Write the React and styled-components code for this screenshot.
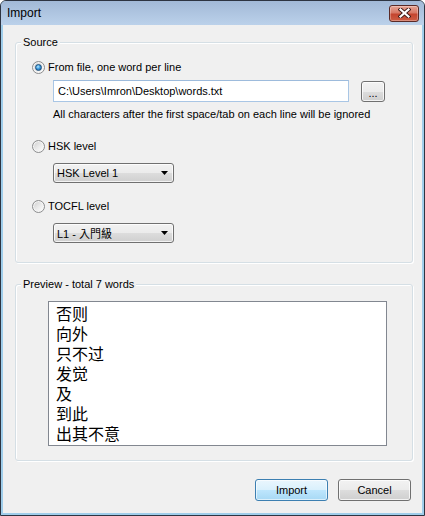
import React from "react";
import styled, { createGlobalStyle } from "styled-components";

const GlobalStyle = createGlobalStyle`
  html, body {
    margin: 0;
    padding: 0;
    background: #ffffff;
  }
  body {
    font-family: "Liberation Sans", Arial, sans-serif;
    font-size: 11px;
    color: #000;
  }
`;

const Window = styled.div`
  width: 425px;
  height: 516px;
  box-sizing: border-box;
  border: 1px solid #2d3441;
  border-radius: 6px 6px 0 0;
  background: #9fcdea;
  display: flex;
  flex-direction: column;
  overflow: hidden;
`;

const TitleBar = styled.div`
  height: 24px;
  flex: none;
  display: flex;
  align-items: center;
  justify-content: space-between;
  padding: 0 5px 0 6px;
  background: linear-gradient(#a2b9d7, #bbd1ea);
`;

const Title = styled.span`
  font-size: 12px;
  color: #000;
`;

const CloseButton = styled.div`
  width: 30px;
  height: 17px;
  box-sizing: border-box;
  border: 1px solid #5a2a26;
  border-radius: 3px;
  background: linear-gradient(#e8a595 0%, #d77865 45%, #c4452f 55%, #cd5d44 100%);
  box-shadow: inset 0 0 0 1px rgba(255, 255, 255, 0.3);
  display: flex;
  align-items: center;
  justify-content: center;
`;

const Client = styled.div`
  flex: 1;
  margin: 0 2px 2px;
  background: #f0f0f0;
  display: flex;
  flex-direction: column;
  padding: 17px 9px 0 12px;
`;

const Group = styled.div`
  border: 1px solid #d5dfe5;
  border-radius: 3px;
  box-shadow: inset 1px 1px 0 #fff, 1px 1px 0 #fff;
  display: flex;
  flex-direction: column;
  align-items: flex-start;
  padding-bottom: ${(p) => p.$bottom}px;
  margin-top: ${(p) => p.$top || 0}px;
`;

const Legend = styled.div`
  margin: -7px 0 0 5px;
  padding: 0 2px;
  background: #f0f0f0;
  line-height: 13px;
`;

const RadioRow = styled.label`
  display: flex;
  align-items: center;
  height: 15px;
  margin: ${(p) => p.$top}px 0 0 16px;
  line-height: 13px;
`;

const RadioCircle = styled.span`
  width: 13px;
  height: 13px;
  box-sizing: border-box;
  flex: none;
  border-radius: 50%;
  border: 1px solid #8c8d8e;
  background: linear-gradient(135deg, #cdcdcd 0%, #ececec 55%, #ffffff 100%);
  box-shadow: inset 0 0 0 1px #f6f6f6;
  display: flex;
  align-items: center;
  justify-content: center;
  margin-right: 3px;

  &::after {
    content: "";
    display: ${(p) => (p.$checked ? "block" : "none")};
    width: 7px;
    height: 7px;
    box-sizing: border-box;
    border-radius: 50%;
    border: 1px solid #1c4f7c;
    background: radial-gradient(circle at 40% 35%, #b7ecff 0%, #3d9be0 45%, #14538f 100%);
  }
`;

const Indent = styled.div`
  margin: ${(p) => p.$top}px 0 0 37px;
`;

const InputRow = styled(Indent)`
  display: flex;
  align-items: flex-end;
  gap: 12px;
`;

const TextInput = styled.div`
  width: 296px;
  height: 22px;
  box-sizing: border-box;
  border: 1px solid #a9c6e5;
  border-top-color: #9dbbdc;
  background: #fff;
  padding-left: 4px;
  display: flex;
  align-items: center;
`;

const Hint = styled(Indent)`
  line-height: 13px;
`;

const grayFace = `
  border: 1px solid #707070;
  border-radius: 3px;
  background: linear-gradient(#f2f2f2 0%, #ebebeb 50%, #dddddd 50%, #cfcfcf 100%);
  box-shadow: inset 0 0 0 1px rgba(255, 255, 255, 0.75);
`;

const SmallButton = styled.div`
  width: 24px;
  height: 21px;
  box-sizing: border-box;
  ${grayFace}
  display: flex;
  align-items: center;
  justify-content: center;
  padding-top: 2px;
`;

const Select = styled(Indent)`
  width: 121px;
  height: 20px;
  box-sizing: border-box;
  ${grayFace}
  display: flex;
  align-items: center;
  justify-content: space-between;
  padding: 0 5px 0 3px;
  font-family: "Liberation Sans", "Noto Sans CJK TC", sans-serif;
`;

const ListBox = styled.div`
  width: 339px;
  height: 145px;
  box-sizing: border-box;
  margin: 10px 0 0 32px;
  border: 1px solid #828790;
  background: #fff;
  padding: 1px 0 0 7px;
`;

const ListItem = styled.div`
  font-family: "Noto Sans CJK SC", sans-serif;
  font-size: 16px;
  line-height: 20px;
  height: 20px;
`;

const Footer = styled.div`
  display: flex;
  justify-content: flex-end;
  gap: 10px;
  margin: 18px 2px 0 0;
`;

const DialogButton = styled.div`
  width: 73px;
  height: 22px;
  box-sizing: border-box;
  display: flex;
  align-items: center;
  justify-content: center;
  ${(p) =>
    p.$default
      ? `
  border: 1px solid #3c7fb1;
  border-radius: 3px;
  background: linear-gradient(#eaf6fd 0%, #d9f0fc 50%, #bee6fd 50%, #a7d9f5 100%);
  box-shadow: inset 0 0 0 1px rgba(255, 255, 255, 0.6);
  `
      : grayFace}
`;

const words = ["否则", "向外", "只不过", "发觉", "及", "到此", "出其不意"];

const CloseGlyph = () => (
  <svg width="13" height="10" viewBox="0 0 13 10">
    <path d="M2.5 1.5 L10.5 8.5 M10.5 1.5 L2.5 8.5" stroke="#3e1915" strokeWidth="4" strokeLinecap="square" />
    <path d="M2.5 1.5 L10.5 8.5 M10.5 1.5 L2.5 8.5" stroke="#ffffff" strokeWidth="2.2" strokeLinecap="square" />
  </svg>
);

const Arrow = () => (
  <svg width="7" height="4" viewBox="0 0 7 4">
    <path d="M0 0 H7 L3.5 4 Z" fill="#000" />
  </svg>
);

export default function App() {
  return (
    <>
      <GlobalStyle />
      <Window>
        <TitleBar>
          <Title>Import</Title>
          <CloseButton>
            <CloseGlyph />
          </CloseButton>
        </TitleBar>
        <Client>
          <Group $bottom={19}>
            <Legend>Source</Legend>
            <RadioRow $top={11}>
              <RadioCircle $checked />
              From file, one word per line
            </RadioRow>
            <InputRow $top={5}>
              <TextInput>C:\Users\Imron\Desktop\words.txt</TextInput>
              <SmallButton>...</SmallButton>
            </InputRow>
            <Hint $top={6}>
              All characters after the first space/tab on each line will be ignored
            </Hint>
            <RadioRow $top={18}>
              <RadioCircle />
              HSK level
            </RadioRow>
            <Select $top={9}>
              <span>HSK Level 1</span>
              <Arrow />
            </Select>
            <RadioRow $top={16}>
              <RadioCircle />
              TOCFL level
            </RadioRow>
            <Select $top={9}>
              <span>L1 - 入門級</span>
              <Arrow />
            </Select>
          </Group>
          <Group $bottom={14} $top={21}>
            <Legend>Preview - total 7 words</Legend>
            <ListBox>
              {words.map((w) => (
                <ListItem key={w}>{w}</ListItem>
              ))}
            </ListBox>
          </Group>
          <Footer>
            <DialogButton $default>Import</DialogButton>
            <DialogButton>Cancel</DialogButton>
          </Footer>
        </Client>
      </Window>
    </>
  );
}
